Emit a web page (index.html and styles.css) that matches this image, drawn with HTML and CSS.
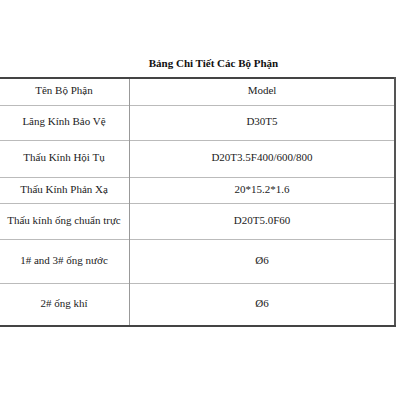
FILE: index.html
```html
<!DOCTYPE html>
<html>
<head>
<meta charset="utf-8">
<link rel="stylesheet" href="styles.css">
</head>
<body>
<div class="page">
  <h1 class="title">Bảng Chi Tiết Các Bộ Phận</h1>
  <table class="parts">
    <tr class="r-head"><td class="c1">Tên Bộ Phận</td><td class="c2">Model</td></tr>
    <tr class="r1"><td class="c1">Lăng Kính Bảo Vệ</td><td class="c2">D30T5</td></tr>
    <tr class="r2"><td class="c1">Thấu Kính Hội Tụ</td><td class="c2">D20T3.5F400/600/800</td></tr>
    <tr class="r3"><td class="c1">Thấu Kính Phản Xạ</td><td class="c2">20*15.2*1.6</td></tr>
    <tr class="r4"><td class="c1">Thấu kính ống chuẩn trực</td><td class="c2">D20T5.0F60</td></tr>
    <tr class="r5"><td class="c1">1# and 3# ống nước</td><td class="c2">Ø6</td></tr>
    <tr class="r6"><td class="c1">2# ống khí</td><td class="c2">Ø6</td></tr>
  </table>
</div>
</body>
</html>
```

FILE: styles.css
```css
html, body {
  margin: 0;
  padding: 0;
  background: #fff;
}
.page {
  width: 400px;
  height: 400px;
  padding-top: 56px;
  box-sizing: border-box;
  font-family: "Liberation Serif", "Times New Roman", serif;
  color: #222;
}
.title {
  margin: 0 0 7px 0;
  padding-left: 27px;
  text-align: center;
  font-size: 11px;
  line-height: 14px;
  font-weight: bold;
  color: #111;
}
.parts {
  border-collapse: collapse;
  width: 397px;
  margin-left: -1px;
  font-size: 11px;
  table-layout: fixed;
  border-top: 2px solid #444;
  border-bottom: 2px solid #444;
  border-right: 2px solid #555;
}
.parts td {
  text-align: center;
  vertical-align: middle;
  padding: 0 0 3px 0;
  border-top: 1px solid #bbb;
  line-height: 13px;
}
.parts .c1 {
  width: 130px;
  border-right: 1px solid #999;
}
.r-head td { height: 23px; border-top: none; }
.r1 td { height: 31px; }
.r2 td { height: 33px; }
.r3 td { height: 22px; }
.r4 td { height: 32px; }
.r5 td { height: 40px; }
.r6 td { height: 38px; }
```
